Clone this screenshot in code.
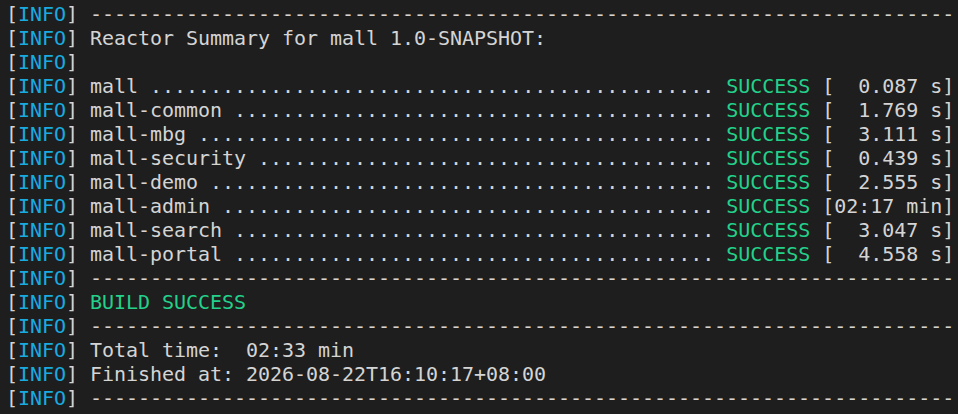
const DASHES = '-'.repeat(72)

type Module = { name: string; time: string }

const modules: Module[] = [
  { name: 'mall', time: '[  0.087 s]' },
  { name: 'mall-common', time: '[  1.769 s]' },
  { name: 'mall-mbg', time: '[  3.111 s]' },
  { name: 'mall-security', time: '[  0.439 s]' },
  { name: 'mall-demo', time: '[  2.555 s]' },
  { name: 'mall-admin', time: '[02:17 min]' },
  { name: 'mall-search', time: '[  3.047 s]' },
  { name: 'mall-portal', time: '[  4.558 s]' },
]

const Line = ({ children }: { children?: React.ReactNode }) => (
  <div className="h-[24px]">
    <span>[</span>
    <span className="text-[#18abe0]">INFO</span>
    <span>]</span>
    {children !== undefined ? ' ' : ''}
    {children}
  </div>
)

const App = () => {
  return (
    <div
      className="h-[414px] w-full overflow-hidden bg-[#1e1e1e] pl-[6px] pt-[2px] text-[20px] leading-[24px] tracking-[-0.04px] whitespace-pre text-[#d4d4d4]"
      style={{ fontFamily: '"DejaVu Sans Mono", "Liberation Mono", monospace' }}
    >
      <Line>{DASHES}</Line>
      <Line>Reactor Summary for mall 1.0-SNAPSHOT:</Line>
      <Line />
      {modules.map((m) => (
        <Line key={m.name}>
          {m.name} {'.'.repeat(51 - m.name.length)} <span className="text-[#23d18b]">SUCCESS</span> {m.time}
        </Line>
      ))}
      <Line>{DASHES}</Line>
      <Line>
        <span className="text-[#23d18b]">BUILD SUCCESS</span>
      </Line>
      <Line>{DASHES}</Line>
      <Line>Total time:  02:33 min</Line>
      <Line>Finished at: 2026-08-22T16:10:17+08:00</Line>
      <Line>{DASHES}</Line>
    </div>
  )
}

export default App
